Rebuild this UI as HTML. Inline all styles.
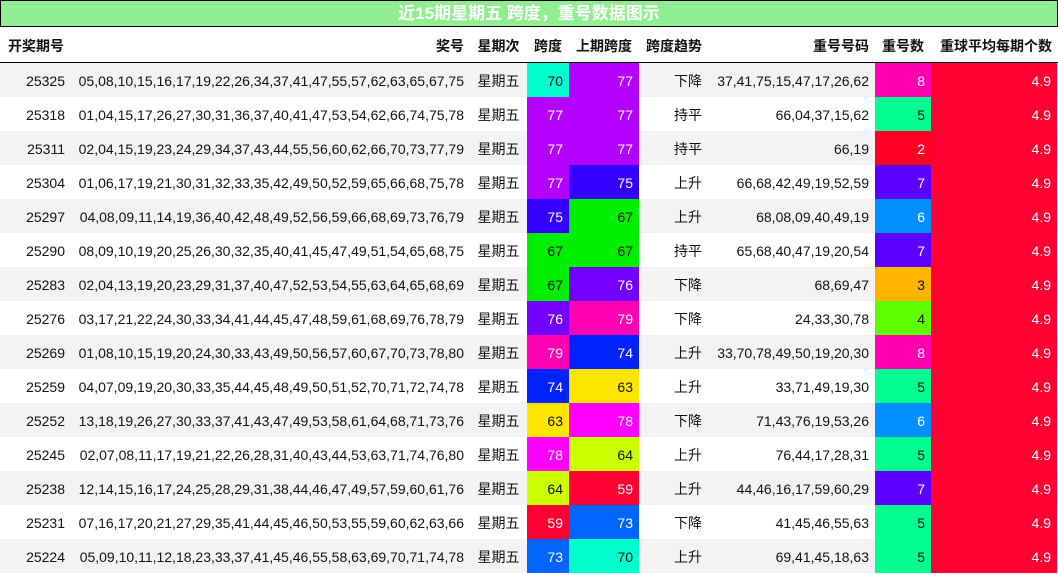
<!DOCTYPE html>
<html><head><meta charset="utf-8"><style>
*{margin:0;padding:0;box-sizing:border-box}
body{width:1058px;height:574px;background:#fff;font-family:"Liberation Sans","Noto Sans CJK SC",sans-serif;font-size:14px;color:#111;overflow:hidden;position:relative}
.title{position:absolute;left:0;top:0;width:1058px;height:27px;background:#90ee90;border:1px solid #000;color:#fff;font-weight:bold;font-size:17px;text-align:center;line-height:26px}
.hdr{position:absolute;top:27px;left:0;width:1058px;height:36px;border-bottom:1px solid #000;font-weight:bold}
.row{position:absolute;left:0;width:1058px;height:34px}
.c{position:absolute;top:0;height:100%;line-height:36px;white-space:nowrap;padding:0 6px}
.hdr .c{line-height:38px}
.r{text-align:right}.m{text-align:center}
</style></head><body>
<div class="title">近15期星期五 跨度，重号数据图示</div>
<div class="hdr">
<div class="c" style="left:2px;width:70px">开奖期号</div>
<div class="c r" style="left:72px;width:398px">奖号</div>
<div class="c m" style="left:470px;width:57px">星期次</div>
<div class="c m" style="left:527px;width:42px">跨度</div>
<div class="c m" style="left:569px;width:70px">上期跨度</div>
<div class="c r" style="left:639px;width:69px">跨度趋势</div>
<div class="c r" style="left:708px;width:167px">重号号码</div>
<div class="c m" style="left:875px;width:56px">重号数</div>
<div class="c r" style="left:931px;width:127px">重球平均每期个数</div>
</div>
<div id="rows"></div>
<script>
var d=[
["25325","05,08,10,15,16,17,19,22,26,34,37,41,47,55,57,62,63,65,67,75","70","77","下降","37,41,75,15,47,17,26,62","8"],
["25318","01,04,15,17,26,27,30,31,36,37,40,41,47,53,54,62,66,74,75,78","77","77","持平","66,04,37,15,62","5"],
["25311","02,04,15,19,23,24,29,34,37,43,44,55,56,60,62,66,70,73,77,79","77","77","持平","66,19","2"],
["25304","01,06,17,19,21,30,31,32,33,35,42,49,50,52,59,65,66,68,75,78","77","75","上升","66,68,42,49,19,52,59","7"],
["25297","04,08,09,11,14,19,36,40,42,48,49,52,56,59,66,68,69,73,76,79","75","67","上升","68,08,09,40,49,19","6"],
["25290","08,09,10,19,20,25,26,30,32,35,40,41,45,47,49,51,54,65,68,75","67","67","持平","65,68,40,47,19,20,54","7"],
["25283","02,04,13,19,20,23,29,31,37,40,47,52,53,54,55,63,64,65,68,69","67","76","下降","68,69,47","3"],
["25276","03,17,21,22,24,30,33,34,41,44,45,47,48,59,61,68,69,76,78,79","76","79","下降","24,33,30,78","4"],
["25269","01,08,10,15,19,20,24,30,33,43,49,50,56,57,60,67,70,73,78,80","79","74","上升","33,70,78,49,50,19,20,30","8"],
["25259","04,07,09,19,20,30,33,35,44,45,48,49,50,51,52,70,71,72,74,78","74","63","上升","33,71,49,19,30","5"],
["25252","13,18,19,26,27,30,33,37,41,43,47,49,53,58,61,64,68,71,73,76","63","78","下降","71,43,76,19,53,26","6"],
["25245","02,07,08,11,17,19,21,22,26,28,31,40,43,44,53,63,71,74,76,80","78","64","上升","76,44,17,28,31","5"],
["25238","12,14,15,16,17,24,25,28,29,31,38,44,46,47,49,57,59,60,61,76","64","59","上升","44,46,16,17,59,60,29","7"],
["25231","07,16,17,20,21,27,29,35,41,44,45,46,50,53,55,59,60,62,63,66","59","73","下降","41,45,46,55,63","5"],
["25224","05,09,10,11,12,18,23,33,37,41,45,46,55,58,63,69,70,71,74,78","73","70","上升","69,41,45,18,63","5"]];
var sc={"70":["#00ffcc",0],"77":["#b300ff",1],"75":["#3300ff",1],"67":["#00ee00",0],"76":["#7300ff",1],"79":["#ff00b3",1],"74":["#0022ff",1],"63":["#ffe600",0],"78":["#ff00ff",1],"64":["#ccff00",0],"59":["#ff0033",1],"73":["#0066ff",1]};
var cc={"8":["#ff00b0",1],"5":["#00ff90",0],"2":["#ff0022",1],"7":["#5c00ff",1],"6":["#0090ff",1],"3":["#ffb400",0],"4":["#5eff00",0]};
var h="";
d.forEach(function(r,i){
var bg=i%2==0?"#f3f3f3":"#fff";var a=sc[r[2]],b=sc[r[3]],c=cc[r[6]];
h+='<div class="row" style="top:'+(63+i*34)+'px;background:'+bg+'">'+
'<div class="c r" style="left:0;width:71px">'+r[0]+'</div>'+
'<div class="c r" style="left:72px;width:398px">'+r[1]+'</div>'+
'<div class="c m" style="left:470px;width:57px">星期五</div>'+
'<div class="c r" style="left:527px;width:42px;background:'+a[0]+';color:'+(a[1]?'#fff':'#111')+'">'+r[2]+'</div>'+
'<div class="c r" style="left:569px;width:70px;background:'+b[0]+';color:'+(b[1]?'#fff':'#111')+'">'+r[3]+'</div>'+
'<div class="c r" style="left:639px;width:69px">'+r[4]+'</div>'+
'<div class="c r" style="left:708px;width:167px">'+r[5]+'</div>'+
'<div class="c r" style="left:875px;width:56px;background:'+c[0]+';color:'+(c[1]?'#fff':'#111')+'">'+r[6]+'</div>'+
'<div class="c r" style="left:931px;width:126px;background:#ff0030;color:#fff">4.9</div></div>';});
document.getElementById("rows").innerHTML=h;
</script>
</body></html>
